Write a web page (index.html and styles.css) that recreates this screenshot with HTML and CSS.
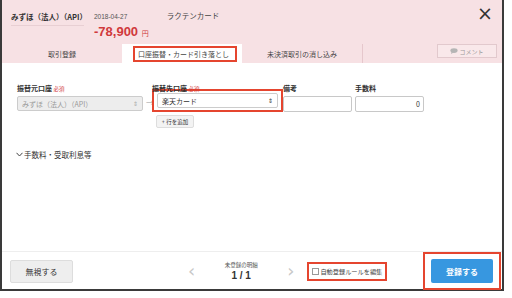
FILE: index.html
```html
<!DOCTYPE html>
<html lang="ja">
<head>
<meta charset="utf-8">
<link rel="stylesheet" href="styles.css">
</head>
<body>
<div class="modal">
  <div class="head">
    <div class="info">
      <div class="acct">みずほ（法人）（API）</div>
      <div class="datecol">
        <div class="date">2018-04-27</div>
        <div class="amount">-78,900 <span class="yen">円</span></div>
      </div>
      <div class="desc">ラクテンカード</div>
      <div class="close">×</div>
    </div>
    <div class="tabs">
      <div class="tab">取引登録</div>
      <div class="tab active"><span class="mark tabmark">口座振替・カード引き落とし</span></div>
      <div class="tab third">未決済取引の消し込み</div>
      <div class="spacer"></div>
      <div class="comment"><svg width="8" height="6" viewBox="0 0 8 6"><ellipse cx="4" cy="2.6" rx="3.6" ry="2.4" fill="#b5b5b5"/><path d="M1.5 4 L1 6 L3.5 4.6Z" fill="#b5b5b5"/></svg>コメント</div>
    </div>
  </div>
  <div class="body">
    <div class="row">
      <div class="field f1">
        <div class="label">振替元口座 <span class="req">必須</span></div>
        <div class="select disabled"><span>みずほ（法人）（API）</span><span class="caret">⇕</span></div>
      </div>
      <div class="arrow">→</div>
      <div class="field f2">
        <div class="label">振替先口座 <span class="req">必須</span></div>
        <div class="mark selmark"><div class="select"><span>楽天カード</span><span class="caret dark">⇕</span></div></div>
        <div class="addrow">+ 行を追加</div>
      </div>
      <div class="inputs">
        <div class="field">
          <div class="label">備考</div>
          <div class="input"></div>
        </div>
        <div class="field">
          <div class="label">手数料</div>
          <div class="input num">0</div>
        </div>
      </div>
    </div>
    <div class="fees"><svg width="7" height="5" viewBox="0 0 7 5"><path d="M0.5 0.8 L3.5 4 L6.5 0.8" fill="none" stroke="#444" stroke-width="1"/></svg>手数料・受取利息等</div>
  </div>
  <div class="foot">
    <div class="ignore">無視する</div>
    <div class="pager">
      <span class="chev">‹</span>
      <div class="pgtxt"><div class="small">未登録の明細</div><div class="count">1 / 1</div></div>
      <span class="chev">›</span>
    </div>
    <div class="mark rulemark"><span class="cb"></span>自動登録ルールを編集</div>
    <div class="spacer"></div>
    <div class="mark btnmark"><div class="submit">登録する</div></div>
  </div>
</div>
</body>
</html>
```
FILE: styles.css
```css
html, body { margin: 0; padding: 0; background: #fff; }
body { font-family: "Noto Sans CJK JP", "Liberation Sans", sans-serif; color: #333; width: 512px; height: 298px; overflow: hidden; }
.modal { width: 500px; height: 289px; border-left: 2px solid #3a3a3a; border-right: 2px solid #3a3a3a; border-bottom: 2px solid #3a3a3a; display: flex; flex-direction: column; background: #fff; }
.head { background: #f7e1e4; height: 63px; display: flex; flex-direction: column; }
.info { display: flex; align-items: flex-start; height: 44px; padding-left: 9px; }
.acct { font-size: 7.5px; font-weight: bold; margin-top: 12px; padding-bottom: 3px; border-bottom: 1px solid #e8cfd3; width: 73px; line-height: 10px; }
.datecol { margin-left: 10px; margin-top: 12px; }
.date { font-size: 6.5px; color: #555; line-height: 10px; font-family: "Liberation Sans", sans-serif; }
.amount { font-size: 13px; font-weight: bold; color: #d0393b; font-family: "Liberation Sans", sans-serif; line-height: 15px; margin-top: 2px; }
.yen { font-size: 7px; font-weight: normal; font-family: "Noto Sans CJK JP", sans-serif; }
.desc { font-size: 7.5px; margin-left: 18px; margin-top: 11px; color: #444; line-height: 10px; }
.close { margin-left: auto; margin-right: 9px; margin-top: 2px; font-size: 19px; font-family: "DejaVu Sans", sans-serif; line-height: 22px; color: #333; }
.tabs { display: flex; height: 19px; align-items: stretch; }
.tab { width: 120px; font-size: 7px; display: flex; align-items: center; justify-content: center; color: #444; }
.tab.active { background: #fff; }
.tab.third { border-right: 1px solid #e6c7cc; }
.spacer { flex: 1; }
.mark { border: 2px solid #e5452f; }
.tabmark { padding: 1px 3px; width: 94px; text-align: left; line-height: 10px; margin-top: 1px; margin-left: 6px; }
.comment { align-self: center; margin-top: -5px; margin-right: 5px; width: 58px; height: 12px; border: 1px solid #e2c9cd; background: #f9e8ea; font-size: 6px; color: #999; display: flex; align-items: center; justify-content: center; gap: 1px; }
.body { flex: 1; padding: 20px 0 0 15px; }
.row { display: flex; align-items: flex-start; }
.label { font-size: 7px; font-weight: bold; line-height: 10px; height: 10px; margin-bottom: 3px; color: #333; }
.req { color: #d0393b; font-size: 5.5px; font-weight: normal; }
.field.f1 { width: 126px; }
.select { height: 15px; border: 1px solid #ccc; border-radius: 2px; display: flex; align-items: center; justify-content: space-between; padding: 0 4px; box-sizing: border-box; font-size: 7px; background: #fff; color: #333; }
.select.disabled { background: #ededed; color: #999; }
.caret { font-size: 6px; color: #aaa; }
.caret.dark { color: #333; }
.arrow { font-size: 8px; color: #999; margin: 14px 1px 0 3px; }
.field.f2 { width: 131px; margin-left: -3px; }
.selmark { padding: 2px 3px; margin-top: -7px; }
.addrow { margin-top: 3px; margin-left: 4px; width: 38px; height: 13px; border: 1px solid #ddd; background: #f3f3f3; border-radius: 2px; font-size: 5.5px; display: flex; align-items: center; justify-content: center; box-sizing: border-box; color: #333; }
.inputs { display: grid; grid-template-columns: 69px 69px; column-gap: 3px; }
.input { height: 16px; border: 1px solid #c8c8c8; border-radius: 2px; box-sizing: border-box; font-size: 7px; padding: 0 3px; display: flex; align-items: center; color: #333; background: #fff; }
.input.num { justify-content: flex-end; }
.fees { margin-top: 21px; margin-left: -1px; font-size: 7.5px; display: flex; align-items: center; gap: 1px; color: #333; }
.foot { height: 38px; border-top: 1px solid #eee; display: flex; align-items: center; padding: 0 1px 0 8px; box-sizing: border-box; }
.ignore { width: 63px; height: 23px; background: #eee; border: 1px solid #ddd; border-radius: 2px; box-sizing: border-box; font-size: 8px; display: flex; align-items: center; justify-content: center; margin-top: 2px; }
.pager { display: flex; align-items: center; margin-left: 115px; }
.chev { font-size: 18px; color: #c8c8c8; font-family: "DejaVu Sans", sans-serif; line-height: 18px; }
.pgtxt { width: 92px; text-align: center; margin-top: 1px; }
.small { font-size: 5.5px; color: #555; line-height: 8px; }
.count { font-size: 10px; font-weight: bold; line-height: 13px; font-family: "Liberation Sans", sans-serif; }
.rulemark { margin-left: 13px; padding: 3px 3px; font-size: 6.2px; display: flex; align-items: center; gap: 1px; color: #444; margin-top: 1px; }
.cb { width: 5px; height: 5px; border: 1px solid #999; background: #fff; }
.btnmark { padding: 5px 6px; margin-top: 1px; }
.submit { width: 62px; height: 24px; background: #3797e0; border-radius: 2px; color: #fff; font-size: 8px; font-weight: bold; display: flex; align-items: center; justify-content: center; }
```
